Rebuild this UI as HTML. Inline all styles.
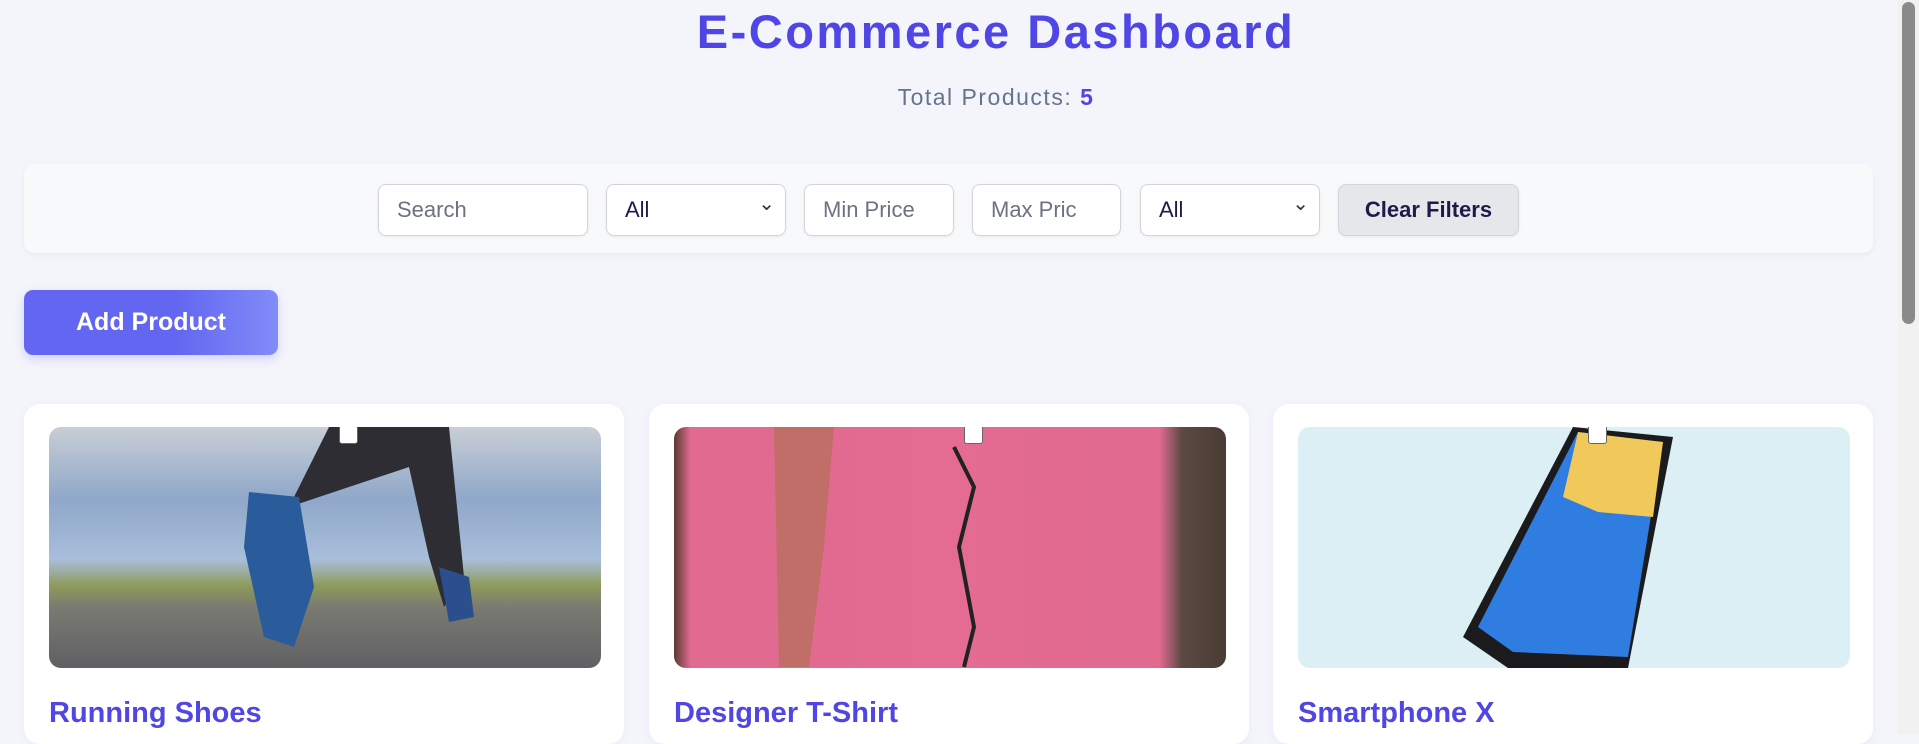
<!DOCTYPE html>
<html><head><meta charset="utf-8"><style>
*{box-sizing:border-box;margin:0;padding:0}
html,body{width:1919px;height:734px;overflow:hidden;background:#f4f5fb;font-family:"Liberation Sans",sans-serif}
.sb{position:absolute;left:1898px;top:0;width:21px;height:734px;background:#f1f1f1}
.sb div{position:absolute;left:4px;top:2px;width:13px;height:322px;border-radius:7px;background:#8a8a8a}
h1{position:absolute;left:0;width:1992px;top:4px;text-align:center;font-size:47px;font-weight:700;color:#4f46e5;letter-spacing:2.5px}
.tot{position:absolute;left:0;width:1992px;top:84px;text-align:center;font-size:23px;color:#64748b;letter-spacing:1.5px}
.tot b{color:#4f46e5}
.panel{position:absolute;left:24px;top:164px;width:1849px;height:89px;background:#f8f9fb;border-radius:10px;box-shadow:0 2px 6px rgba(0,0,0,.05)}
.f{position:absolute;top:184px;height:52px;background:#fff;border:1px solid #d1d5db;border-radius:8px;font-size:22px;color:#6b7280;padding:0 18px;line-height:50px;box-shadow:0 1px 3px rgba(0,0,0,.06)}
.sel{color:#1e1b4b}
.sel:after{content:"⌄";position:absolute;right:10px;top:-6px;font-size:20px;color:#333}
.clr{background:#e5e7eb;color:#1e1b4b;font-weight:700;text-align:center;padding:0}
.add{position:absolute;left:24px;top:290px;width:254px;height:65px;border-radius:9px;background:linear-gradient(90deg,#6366f1 0%,#6366f1 60%,#818cf8 100%);color:#fff;font-weight:700;font-size:25px;line-height:65px;text-align:center;box-shadow:0 4px 10px rgba(99,102,241,.25)}
.card{position:absolute;top:404px;width:600px;height:340px;background:#fff;border-radius:16px;box-shadow:0 2px 10px rgba(79,70,229,.06)}
.img{position:absolute;left:25px;top:23px;width:552px;height:241px;border-radius:12px;overflow:hidden}
.cb{position:absolute;top:-2px;width:19px;height:19px;background:#fff;border:1.5px solid #666;border-radius:3px;z-index:2}
.card h2{position:absolute;left:25px;top:293px;font-size:29px;font-weight:700;color:#4f46e5}
</style></head><body>
<div class="sb"><div></div></div>
<h1>E-Commerce Dashboard</h1>
<div class="tot">Total Products: <b>5</b></div>
<div class="panel"></div>
<div class="f" style="left:378px;width:210px">Search</div>
<div class="f sel" style="left:606px;width:180px">All</div>
<div class="f" style="left:804px;width:150px">Min Price</div>
<div class="f" style="left:972px;width:149px">Max Pric</div>
<div class="f sel" style="left:1140px;width:180px">All</div>
<div class="f clr" style="left:1338px;width:181px">Clear Filters</div>
<div class="add">Add Product</div>

<div class="card" style="left:24px"><div class="img" style="background:linear-gradient(180deg,#c9ced6 0%,#8fa7c9 30%,#a9bedb 55%,#8d9a5a 66%,#7a7a72 75%,#5f6063 100%)">
<svg width="552" height="241" style="position:absolute;left:0;top:0"><path d="M280 0 L400 0 L415 150 L395 180 L380 130 L360 40 L300 60 L240 80 Z" fill="#2d2d33"/><path d="M200 65 L250 70 L265 160 L245 220 L215 210 L195 120 Z" fill="#2a5c9c"/><path d="M390 140 L420 150 L425 190 L400 195 Z" fill="#2a4f8c"/></svg>
<div class="cb" style="left:290px"></div></div><h2>Running Shoes</h2></div>

<div class="card" style="left:649px"><div class="img" style="background:linear-gradient(90deg,#5a3a2e 0%,#e06a90 3%,#e46b92 50%,#e06a90 88%,#5b4a42 92%,#4a3b35 100%)">
<svg width="552" height="241" style="position:absolute;left:0;top:0"><path d="M100 0 L160 0 L150 120 L135 240 L105 240 Z" fill="#b37058" opacity=".7"/><path d="M280 20 L300 60 L285 120 L300 200 L290 240" stroke="#222" stroke-width="4" fill="none"/></svg>
<div class="cb" style="left:290px"></div></div><h2>Designer T-Shirt</h2></div>

<div class="card" style="left:1273px"><div class="img" style="background:#dceff4">
<svg width="552" height="241" style="position:absolute;left:0;top:0"><path d="M275 0 L375 10 L330 241 L210 241 L165 210 Z" fill="#1b1b1d"/><path d="M280 5 L365 15 L330 230 L215 225 L180 200 Z" fill="#2f7de0"/><path d="M280 5 L365 15 L355 90 L300 85 L265 70 Z" fill="#f0c95a"/></svg>
<div class="cb" style="left:290px"></div></div><h2>Smartphone X</h2></div>
</body></html>
